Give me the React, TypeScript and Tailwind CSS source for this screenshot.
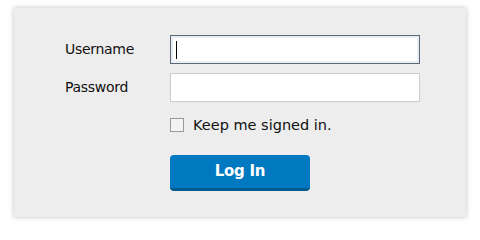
import React from "react";

export default function App() {
  return (
    <div className="w-[480px] h-[227px] bg-white pt-[8px] pl-[14px]" style={{ fontFamily: '"DejaVu Sans", Verdana, sans-serif' }}>
      <div className="w-[452px] h-[209px] bg-[#ededed] shadow-[0_0_5px_rgba(0,0,0,0.25)] pt-[27px] pl-[51px]">
        <div className="grid grid-cols-[105px_250px] gap-y-[9px] items-center">
          <label className="text-[14px] text-[#111] tracking-[-0.3px]">Username</label>
          <div className="h-[29px] bg-white border border-[#5d6976] shadow-[inset_0_0_0_2px_#e8eef3] flex items-center pl-[5px]">
            <div className="w-px h-[18px] bg-black" />
          </div>
          <label className="text-[14px] text-[#111] tracking-[-0.3px]">Password</label>
          <div className="h-[29px] bg-white border border-[#cccccc]" />
          <div />
          <div className="flex items-center gap-[9px] mt-[7px] h-[14px]">
            <div className="w-[14px] h-[14px] border border-[#9a9a9a] bg-[#f3f3f3]" />
            <span className="text-[14.5px] text-[#111] leading-none">Keep me signed in.</span>
          </div>
          <div />
          <button className="mt-[14px] w-[140px] h-[36px] rounded-[4px] bg-[#0079c1] border-b-[3px] border-[#005a8f] text-white font-bold text-[15px] tracking-[-0.3px]">
            Log In
          </button>
        </div>
      </div>
    </div>
  );
}
